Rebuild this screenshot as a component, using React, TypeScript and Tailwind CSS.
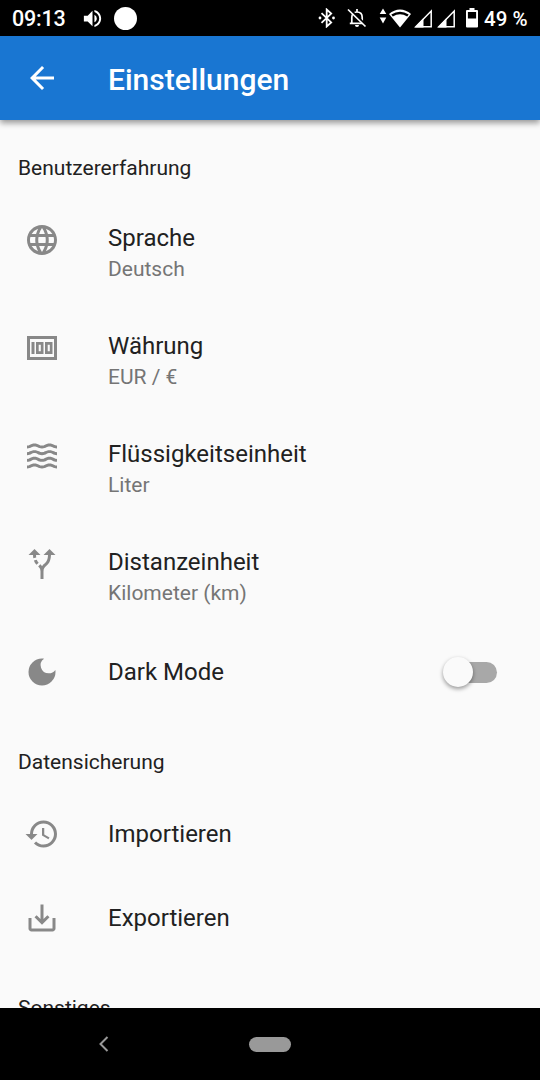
import type { ReactNode } from "react";
import {
  MdAltRoute,
  MdArrowBack,
  MdDarkMode,
  MdHistory,
  MdLanguage,
  MdSaveAlt,
  MdVolumeUp,
  MdWaves,
} from "react-icons/md";

function Signal() {
  return (
    <svg width="19" height="19" viewBox="0 0 19 19" className="shrink-0">
      <path d="M17.2 2V17.8H1.8z" fill="none" stroke="white" strokeWidth="1.5" />
      <path d="M9.5 9V18.5H1z" fill="white" />
    </svg>
  );
}

function Money() {
  return (
    <svg width="1em" height="1em" viewBox="0 0 24 24" fill="currentColor">
      <path
        fillRule="evenodd"
        d="M2 4h20v16H2zM4 6v12h16V6zM5 8h2v8H5zM8 8h5v8H8zM9.8 9.8v4.4h1.4V9.8zM14 8h5v8h-5zM15.8 9.8v4.4h1.4V9.8z"
      />
    </svg>
  );
}

function StatusBar() {
  return (
    <div className="flex h-9 shrink-0 items-center bg-black pl-3 text-[21.5px] font-medium text-white">
      <span className="w-[54px] whitespace-nowrap pt-0.5 tracking-[-0.2px]">09:13</span>
      <MdVolumeUp className="ml-[15px] size-[23px]" />
      <div className="ml-[10px] size-[23px] rounded-full bg-white" />
      <div className="ml-auto flex items-center">
        <svg width="18" height="20" viewBox="0 0 18 20">
          <path
            d="M3.5 5.2l9.7 9.2-4.5 4.1V1.5l4.5 4.1-9.7 9.2"
            fill="none"
            stroke="white"
            strokeWidth="1.8"
          />
          <circle cx="2" cy="10" r="1.4" fill="white" />
          <circle cx="15.5" cy="10" r="1.4" fill="white" />
        </svg>
        <svg width="20" height="20" viewBox="0 0 20 20" className="ml-[11px]">
          <path
            d="M4.8 15V9.5c0-3.2 1.9-5.5 5.2-5.5s5.2 2.3 5.2 5.5V15M2.8 15.3h14.4M10 4V1"
            fill="none"
            stroke="white"
            strokeWidth="1.7"
          />
          <path d="M8 17h4a2 2 0 0 1-4 0z" fill="white" />
          <path d="M2.3 .5l17 17" stroke="black" strokeWidth="2" />
          <path d="M1 1.5l17.5 17" stroke="white" strokeWidth="1.7" />
        </svg>
        <svg width="8" height="16" viewBox="0 0 8 16" className="mb-1 ml-[12px]">
          <path d="M4 .5l3.3 5.5H.7zM4 15.500L.7 9.500h6.600z" fill="white" />
        </svg>
        <svg width="22" height="19" viewBox="0 0 22 19" className="ml-[2px]">
          <path d="M11 18.5L0 5C6.500-1 15.500-1 22 5z" fill="white" />
          <path d="M2.3 5.6Q11-.3 19.7 5.6L18.2 7.5Q11 2.800 3.800 7.500z" fill="black" />
        </svg>
        <div className="ml-[3px] flex gap-1">
          <Signal />
          <Signal />
        </div>
        <svg width="12" height="20" viewBox="0 0 12 20" className="ml-[10px]">
          <path d="M3.5 0h5v2H11a1 1 0 0 1 1 1v15.5a1 1 0 0 1-1 1H1a1 1 0 0 1-1-1V3a1 1 0 0 1 1-1h2.500z" fill="white" />
          <path d="M1.9 4h8.2v6.5H1.9z" fill="black" />
        </svg>
        <span className="ml-[6px] w-[56px] whitespace-nowrap pt-0.5 text-[20.5px]">49 %</span>
      </div>
    </div>
  );
}

function Subheader({ children }: { children: ReactNode }) {
  return <h2 className="flex h-[72px] items-center px-[18px] pt-0.5 text-[21px]">{children}</h2>;
}

type ItemProps = {
  icon: ReactNode;
  title: string;
  value?: string;
  action?: ReactNode;
};

function Item({ icon, title, value, action }: ItemProps) {
  return (
    <li className={value ? "flex h-[108px] pl-6" : "flex h-[72px] items-center pl-6"}>
      <div className={value ? "pt-[18px] text-4xl text-[#888]" : "text-4xl text-[#888]"}>{icon}</div>
      <div className={value ? "ml-12 pt-[18px]" : "ml-12"}>
        <div className="text-2xl leading-8">{title}</div>
        {value && <div className="text-[21px] leading-[30px] text-[#757575]">{value}</div>}
      </div>
      {action}
    </li>
  );
}

function Switch() {
  return (
    <div className="relative ml-auto mr-[43px] h-[21px] w-[51px] rounded-full bg-[#a8a8a8]">
      <div className="absolute -left-[3px] -top-[5px] size-[30px] rounded-full bg-[#fafafa] shadow-[0_2px_4px_rgba(0,0,0,0.4)]" />
    </div>
  );
}

export default function App() {
  return (
    <div className="flex h-[1080px] w-[540px] flex-col overflow-hidden bg-[#fafafa] font-[Roboto,sans-serif] text-[#212121]">
      <StatusBar />
      <header className="z-10 flex h-[84px] shrink-0 items-center bg-[#1976d2] pl-6 text-white shadow-[0_3px_6px_rgba(0,0,0,0.4)]">
        <MdArrowBack className="size-9" />
        <h1 className="ml-12 pt-0.5 text-[30px] font-medium">Einstellungen</h1>
      </header>
      <main className="min-h-0 flex-1 overflow-hidden pt-3">
        <Subheader>Benutzererfahrung</Subheader>
        <ul>
          <Item icon={<MdLanguage />} title="Sprache" value="Deutsch" />
          <Item icon={<Money />} title="Währung" value="EUR / €" />
          <Item icon={<MdWaves />} title="Flüssigkeitseinheit" value="Liter" />
          <Item icon={<MdAltRoute />} title="Distanzeinheit" value="Kilometer (km)" />
          <Item icon={<MdDarkMode />} title="Dark Mode" action={<Switch />} />
        </ul>
        <div className="mt-[18px]">
          <Subheader>Datensicherung</Subheader>
          <ul className="flex flex-col gap-3">
            <Item icon={<MdHistory />} title="Importieren" />
            <Item icon={<MdSaveAlt />} title="Exportieren" />
          </ul>
        </div>
        <div className="mt-[18px]">
          <Subheader>Sonstiges</Subheader>
        </div>
      </main>
      <nav className="flex h-[72px] shrink-0 items-center bg-black pl-[98px]">
        <svg width="12" height="16" viewBox="0 0 12 16">
          <path d="M9.5 1L2.5 8l7 7" fill="none" stroke="#999" strokeWidth="2" />
        </svg>
        <div className="ml-[139px] h-[15px] w-[42px] rounded-full bg-[#999]" />
      </nav>
    </div>
  );
}
